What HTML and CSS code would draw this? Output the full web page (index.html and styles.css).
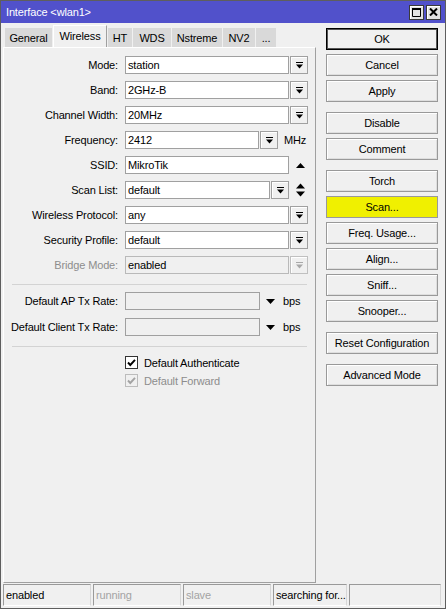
FILE: index.html
```html
<!DOCTYPE html>
<html>
<head>
<meta charset="utf-8">
<title>Interface &lt;wlan1&gt;</title>
<link rel="stylesheet" href="styles.css">
</head>
<body>
<svg class="defs" width="0" height="0" aria-hidden="true">
  <symbol id="dd" viewBox="0 0 7 7">
    <rect x="0" y="0" width="7" height="1" shape-rendering="crispEdges"/>
    <polygon points="0,2.5 7,2.5 3.5,6.5"/>
  </symbol>
</svg>
<div class="window">
  <div class="titlebar">
    <span class="title">Interface &lt;wlan1&gt;</span>
    <div class="tbtns">
      <span class="tbtn"><svg width="9" height="9" viewBox="0 0 9 9"><path d="M0.5 1.5 H8.5 V8.5 H0.5 Z" fill="none" stroke="#000" stroke-width="1"/><rect x="0" y="0" width="9" height="2" fill="#000"/></svg></span>
      <span class="tbtn"><svg width="9" height="8" viewBox="0 0 9 8"><path d="M1 0.5 L8 7.5 M8 0.5 L1 7.5" stroke="#000" stroke-width="2"/></svg></span>
    </div>
  </div>
  <div class="main">
    <div class="left">
      <div class="tabs">
        <div class="tab w-general">General</div>
        <div class="tab active w-wireless">Wireless</div>
        <div class="tab w-ht">HT</div>
        <div class="tab w-wds">WDS</div>
        <div class="tab w-nstreme">Nstreme</div>
        <div class="tab w-nv2">NV2</div>
        <div class="tab w-more">...</div>
      </div>
      <div class="panel">
        <div class="form">
          <div class="lbl">Mode:</div>
          <div class="ctl"><div class="field">station</div><div class="dd"><svg class="ddi"><use href="#dd"/></svg></div></div>

          <div class="lbl">Band:</div>
          <div class="ctl"><div class="field">2GHz-B</div><div class="dd"><svg class="ddi"><use href="#dd"/></svg></div></div>

          <div class="lbl">Channel Width:</div>
          <div class="ctl"><div class="field">20MHz</div><div class="dd"><svg class="ddi"><use href="#dd"/></svg></div></div>

          <div class="lbl">Frequency:</div>
          <div class="ctl"><div class="field fixed w-freq">2412</div><div class="dd"><svg class="ddi"><use href="#dd"/></svg></div><span class="unit u-mhz">MHz</span></div>

          <div class="lbl">SSID:</div>
          <div class="ctl"><div class="field">MikroTik</div><div class="side"><svg width="9" height="5" viewBox="0 0 9 5"><polygon points="0,5 9,5 4.5,0"/></svg></div></div>

          <div class="lbl">Scan List:</div>
          <div class="ctl"><div class="field fixed w-scan">default</div><div class="dd"><svg class="ddi"><use href="#dd"/></svg></div><div class="side"><svg width="9" height="14" viewBox="0 0 9 14"><polygon points="0,5.5 9,5.5 4.5,0.5"/><polygon points="0,8.5 9,8.5 4.5,13.5"/></svg></div></div>

          <div class="lbl">Wireless Protocol:</div>
          <div class="ctl"><div class="field">any</div><div class="dd"><svg class="ddi"><use href="#dd"/></svg></div></div>

          <div class="lbl">Security Profile:</div>
          <div class="ctl"><div class="field">default</div><div class="dd"><svg class="ddi"><use href="#dd"/></svg></div></div>

          <div class="lbl disabled">Bridge Mode:</div>
          <div class="ctl"><div class="field off">enabled</div><div class="dd off"><svg class="ddi"><use href="#dd"/></svg></div></div>
        </div>

        <div class="sep"></div>

        <div class="form form2">
          <div class="lbl">Default AP Tx Rate:</div>
          <div class="ctl"><div class="field fixed w-rate empty"></div><svg class="tri" width="9" height="5" viewBox="0 0 9 5"><polygon points="0,0 9,0 4.5,5"/></svg><span class="unit u-bps">bps</span></div>

          <div class="lbl">Default Client Tx Rate:</div>
          <div class="ctl"><div class="field fixed w-rate empty"></div><svg class="tri" width="9" height="5" viewBox="0 0 9 5"><polygon points="0,0 9,0 4.5,5"/></svg><span class="unit u-bps">bps</span></div>
        </div>

        <div class="sep sep2"></div>

        <div class="checks">
          <div class="check"><span class="box"><svg width="11" height="11" viewBox="0 0 11 11"><path d="M2 5.5 L4.3 8 L9 2.8" fill="none" stroke="#000" stroke-width="1.9"/></svg></span><span>Default Authenticate</span></div>
          <div class="check disabled"><span class="box"><svg width="11" height="11" viewBox="0 0 11 11"><path d="M2 5.5 L4.3 8 L9 2.8" fill="none" stroke="#a3a3a3" stroke-width="1.9"/></svg></span><span>Default Forward</span></div>
        </div>
      </div>
    </div>

    <div class="buttons">
      <div class="group">
        <div class="btn default">OK</div>
        <div class="btn">Cancel</div>
        <div class="btn">Apply</div>
      </div>
      <div class="group">
        <div class="btn">Disable</div>
        <div class="btn">Comment</div>
      </div>
      <div class="group">
        <div class="btn">Torch</div>
        <div class="btn hot">Scan...</div>
        <div class="btn">Freq. Usage...</div>
        <div class="btn">Align...</div>
        <div class="btn">Sniff...</div>
        <div class="btn">Snooper...</div>
      </div>
      <div class="group">
        <div class="btn">Reset Configuration</div>
      </div>
      <div class="group">
        <div class="btn">Advanced Mode</div>
      </div>
    </div>
  </div>

  <div class="status">
    <div class="cell c1">enabled</div>
    <div class="cell c2 dim">running</div>
    <div class="cell c3 dim">slave</div>
    <div class="cell c4">searching for...</div>
    <div class="cell c5"></div>
  </div>
</div>
</body>
</html>
```

FILE: styles.css
```css
* { box-sizing: border-box; }
html, body { margin: 0; padding: 0; }
body {
  font-family: "Liberation Sans", Arial, sans-serif;
  font-size: 11px;
  letter-spacing: -0.15px;
  color: #000;
  background: #f0f0f0;
}
.defs { position: absolute; width: 0; height: 0; overflow: hidden; }

.window {
  width: 446px;
  height: 609px;
  border: 1px solid #5e5e5e;
  background: #f0f0f0;
  display: flex;
  flex-direction: column;
}

/* title bar */
.titlebar {
  height: 22px;
  flex: none;
  background: #5151cb;
  color: #fff;
  display: flex;
  align-items: center;
  justify-content: space-between;
  padding: 0 4px 0 5px;
}
.title { font-size: 11px; }
.tbtns { display: flex; gap: 2px; }
.tbtn {
  width: 15px;
  height: 15px;
  background: #e3e3e3;
  border: 1px solid #3a3a3a;
  box-shadow: inset 1px 1px 0 #fff;
  display: flex;
  align-items: center;
  justify-content: center;
}

/* main */
.main { flex: 1; display: flex; min-height: 0; }
.left {
  width: 313px;
  margin-left: 2px;
  display: flex;
  flex-direction: column;
}

/* tabs */
.tabs {
  height: 24px;
  flex: none;
  display: flex;
  align-items: flex-end;
  gap: 1px;
  padding-left: 2px;
}
.tab {
  height: 19px;
  background: #d9d9d9;
  display: flex;
  align-items: center;
  justify-content: center;
  white-space: nowrap;
}
.tab.active {
  height: 22px;
  background: #f0f0f0;
  border-top: 1px solid #fff;
  border-left: 1px solid #fff;
  border-right: 1px solid #a0a0a0;
  padding-bottom: 2px;
}
.w-general { width: 47px; }
.w-wireless { width: 54px; }
.w-ht { width: 24px; }
.w-wds { width: 38px; }
.w-nstreme { width: 50px; }
.w-nv2 { width: 32px; }
.w-more { width: 20px; }

/* panel */
.panel {
  flex: 1;
  background: #f0f0f0;
  border: 1px solid;
  border-color: #fff #a0a0a0 #a0a0a0 #fff;
  padding: 8px 8px 0 0;
}
.form {
  display: grid;
  grid-template-columns: 114px 1fr;
  column-gap: 7px;
  row-gap: 7px;
  align-items: center;
}
.form2 { row-gap: 8px; }
.lbl { text-align: right; white-space: nowrap; }
.lbl.disabled { color: #8d8d8d; }
.ctl { display: flex; align-items: center; gap: 1px; height: 18px; }
.field {
  flex: 1;
  height: 18px;
  background: #fff;
  border: 1px solid #a0a0a0;
  padding-left: 2px;
  line-height: 16px;
  white-space: nowrap;
  overflow: hidden;
}
.field.fixed { flex: none; }
.w-freq { width: 134px; }
.w-scan { width: 145px; }
.w-rate { width: 135px; }
.field.off { background: #f0f0f0; border-color: #b9b9b9; }
.field.empty { background: #f0f0f0; }
.dd {
  flex: none;
  width: 18px;
  height: 18px;
  border: 1px solid #a0a0a0;
  background: #f0f0f0;
  box-shadow: inset 1px 1px 0 #fff;
  display: flex;
  align-items: center;
  justify-content: center;
}
.ddi { width: 7px; height: 7px; fill: #000; }
.dd.off { border-color: #c0c0c0; }
.dd.off .ddi { fill: #a8a8a8; }
.side {
  flex: none;
  width: 18px;
  height: 18px;
  display: flex;
  align-items: center;
  justify-content: center;
  padding-left: 2px;
}
.side svg { fill: #000; }
.tri { flex: none; margin-left: 5px; fill: #000; }
.unit { white-space: nowrap; }
.u-mhz { margin-left: 5px; }
.u-bps { margin-left: 7px; }

.sep {
  height: 1px;
  background: #d3d3d3;
  margin: 10px 0 7px 8px;
}
.sep2 { margin-bottom: 9px; }

.checks { display: flex; flex-direction: column; gap: 5px; padding-left: 121px; }
.check { display: flex; align-items: center; height: 13px; white-space: nowrap; }
.box {
  width: 13px;
  height: 13px;
  border: 1px solid #333;
  background: #fff;
  margin-right: 6px;
  display: flex;
  align-items: center;
  justify-content: center;
}
.check.disabled { color: #8d8d8d; }
.check.disabled .box { border-color: #bcbcbc; background: #f0f0f0; }

/* buttons */
.buttons {
  width: 112px;
  margin-left: 10px;
  padding-top: 5px;
  display: flex;
  flex-direction: column;
  gap: 10px;
}
.group { display: flex; flex-direction: column; gap: 4px; }
.btn {
  height: 22px;
  border: 1px solid #999;
  background: #f0f0f0;
  box-shadow: inset 1px 1px 0 #fff, inset -1px -1px 0 #dedede;
  display: flex;
  align-items: center;
  justify-content: center;
  white-space: nowrap;
}
.btn.default {
  border-color: #000;
  box-shadow: inset 0 0 0 1px #555;
}
.btn.hot { background: #f0f000; box-shadow: none; }

/* status bar */
.status {
  flex: none;
  display: flex;
  gap: 2px;
  margin-top: 1px;
  padding: 0 2px 2px 2px;
}
.cell {
  height: 22px;
  border: 1px solid;
  border-color: #999 #d6d6d6 #fff #999;
  padding-left: 2px;
  line-height: 20px;
  white-space: nowrap;
  overflow: hidden;
}
.cell.dim { color: #a3a3a3; }
.c1, .c2, .c3 { width: 88px; }
.c4 { width: 74px; }
.c5 { width: 92px; }
```
